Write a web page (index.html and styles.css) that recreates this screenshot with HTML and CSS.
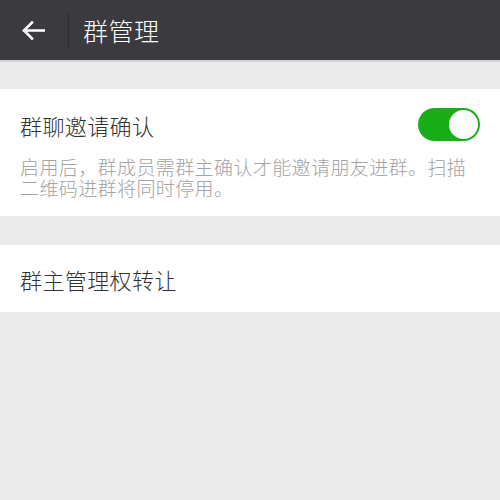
FILE: index.html
```html
<!DOCTYPE html>
<html lang="zh-CN">
<head>
<meta charset="utf-8">
<title>群管理</title>
<link rel="stylesheet" href="styles.css">
</head>
<body>
<header class="topbar">
  <div class="back">
    <svg width="23" height="19" viewBox="0 0 23 19" aria-hidden="true">
      <path d="M2 9.5 H22 M10 1.5 L2 9.5 L10 17.5" fill="none" stroke="#ffffff" stroke-width="2.6" stroke-linecap="square" stroke-linejoin="miter"/>
    </svg>
  </div>
  <div class="divider"></div>
  <div class="title">群管理</div>
</header>
<section class="card card-first">
  <div class="row">
    <span class="label">群聊邀请确认</span>
    <span class="switch"><span class="knob"></span></span>
  </div>
  <p class="desc">启用后，群成员需群主确认才能邀请朋友进群。扫描二维码进群将同时停用。</p>
</section>
<section class="card card-second">
  <span class="label">群主管理权转让</span>
</section>
</body>
</html>
```
FILE: styles.css
```css
html, body {
  margin: 0;
  padding: 0;
}
body {
  background: #ebebeb;
  font-family: "Noto Sans CJK SC", "Noto Sans", sans-serif;
  font-weight: 300;
  width: 500px;
  height: 500px;
  overflow: hidden;
}
.topbar {
  height: 60px;
  background: #3a3a3f;
  display: flex;
  align-items: center;
  border-bottom: 2px solid #d4d4d6;
}
.back {
  width: 68px;
  display: flex;
  justify-content: flex-start;
  padding-left: 22px;
  box-sizing: border-box;
}
.back svg {
  display: block;
}
.divider {
  width: 1px;
  height: 34px;
  background: #2c2c30;
}
.title {
  margin-left: 14px;
  color: #ffffff;
  font-size: 25px;
  letter-spacing: 0.5px;
  line-height: 30px;
}
.card {
  background: #ffffff;
  padding: 0 20px;
}
.card-first {
  margin-top: 27px;
  padding-top: 19px;
  padding-bottom: 18px;
}
.row {
  height: 33px;
  display: flex;
  align-items: center;
  justify-content: space-between;
}
.label {
  font-size: 22px;
  color: #333333;
  letter-spacing: 0.4px;
}
.switch {
  width: 62px;
  height: 33px;
  border-radius: 17px;
  background: #1aad19;
  display: flex;
  align-items: center;
  justify-content: flex-end;
  padding: 0 2px;
  box-sizing: border-box;
}
.knob {
  width: 29px;
  height: 29px;
  border-radius: 50%;
  background: #ffffff;
}
.desc {
  margin: 15px 0 0;
  font-size: 19px;
  line-height: 21px;
  color: #a3a3a3;
  letter-spacing: 0.4px;
}
.card-second {
  margin-top: 29px;
  height: 67px;
  display: flex;
  align-items: center;
}
```
